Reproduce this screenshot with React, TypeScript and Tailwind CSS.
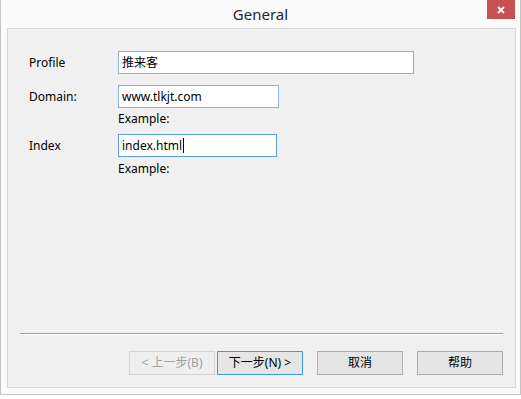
import React from "react";

const font = "font-['Segoe_UI','Noto_Sans','Noto_Sans_CJK_SC',sans-serif]";

const Label = ({ children }: { children: React.ReactNode }) => (
  <div className="w-[89px] shrink-0 text-[12px] leading-[16px] text-black">{children}</div>
);

const TextBox = ({
  value,
  width,
  focused,
}: {
  value: string;
  width: string;
  focused?: boolean;
}) => (
  <div
    className={`${width} h-[23px] bg-white border flex items-center pl-[3px] text-[12px] text-black ${
      focused ? "border-[#569de5]" : "border-[#8eb1da]"
    }`}>
    <span>{value}</span>
    {focused && <span className="w-px h-[15px] bg-black ml-px" />}
  </div>
);

const Button = ({
  children,
  disabled,
  active,
}: {
  children: React.ReactNode;
  disabled?: boolean;
  active?: boolean;
}) => (
  <div
    className={`w-[86px] h-[24px] border flex items-center justify-center text-[12px] ${
      disabled
        ? "border-[#d6d6d6] bg-[#efefef] text-[#a0a0a0]"
        : active
        ? "border-[#3c9be8] bg-[#e5e5e5] text-black"
        : "border-[#adadad] bg-[#e5e5e5] text-black"
    }`}>
    {children}
  </div>
);

export default function App() {
  return (
    <div className={`w-[521px] h-[399px] bg-white ${font}`}>
      <div className="w-[521px] h-[395px] bg-[#fafafa] border-x border-b border-[#c4c4c4] flex flex-col">
        {/* title bar */}
        <div className="relative h-[28px] shrink-0 flex items-center justify-center">
          <span className="text-[15px] text-[#1f2733] leading-none mt-[1px]">General</span>
          <div className="absolute top-0 right-[5px] w-[28px] h-[19px] bg-[#c75050] flex items-center justify-center">
            <svg width="8" height="8" viewBox="0 0 8 8">
              <path d="M1 1L7 7M7 1L1 7" stroke="white" strokeWidth="1.8" />
            </svg>
          </div>
        </div>

        {/* content panel */}
        <div className="ml-[6px] mr-[4px] h-[360px] border border-[#d6d6d6] bg-[#f0f0f0] flex flex-col">
          <div className="flex-1 pl-[21px] pt-[22px]">
            <div className="flex items-center">
              <Label>Profile</Label>
              <TextBox value="推来客" width="w-[296px]" />
            </div>
            <div className="flex items-center mt-[11px]">
              <Label>Domain:</Label>
              <TextBox value="www.tlkjt.com" width="w-[161px]" />
            </div>
            <div className="ml-[89px] mt-[3px] text-[12px] leading-[16px] text-black">Example:</div>
            <div className="flex items-center mt-[7px]">
              <Label>Index</Label>
              <TextBox value="index.html" width="w-[159px]" focused />
            </div>
            <div className="ml-[89px] mt-[4px] text-[12px] leading-[16px] text-black">Example:</div>
          </div>

          <div className="mx-[12px] h-[2px] border-t border-t-[#a0a0a0] border-b border-b-white" />

          <div className="flex justify-end mr-[12px] mt-[16px] mb-[12px]">
            <Button disabled>&lt; 上一步(B)</Button>
            <div className="ml-[2px]">
              <Button active>下一步(N) &gt;</Button>
            </div>
            <div className="ml-[14px]">
              <Button>取消</Button>
            </div>
            <div className="ml-[14px]">
              <Button>帮助</Button>
            </div>
          </div>
        </div>
      </div>
    </div>
  );
}
